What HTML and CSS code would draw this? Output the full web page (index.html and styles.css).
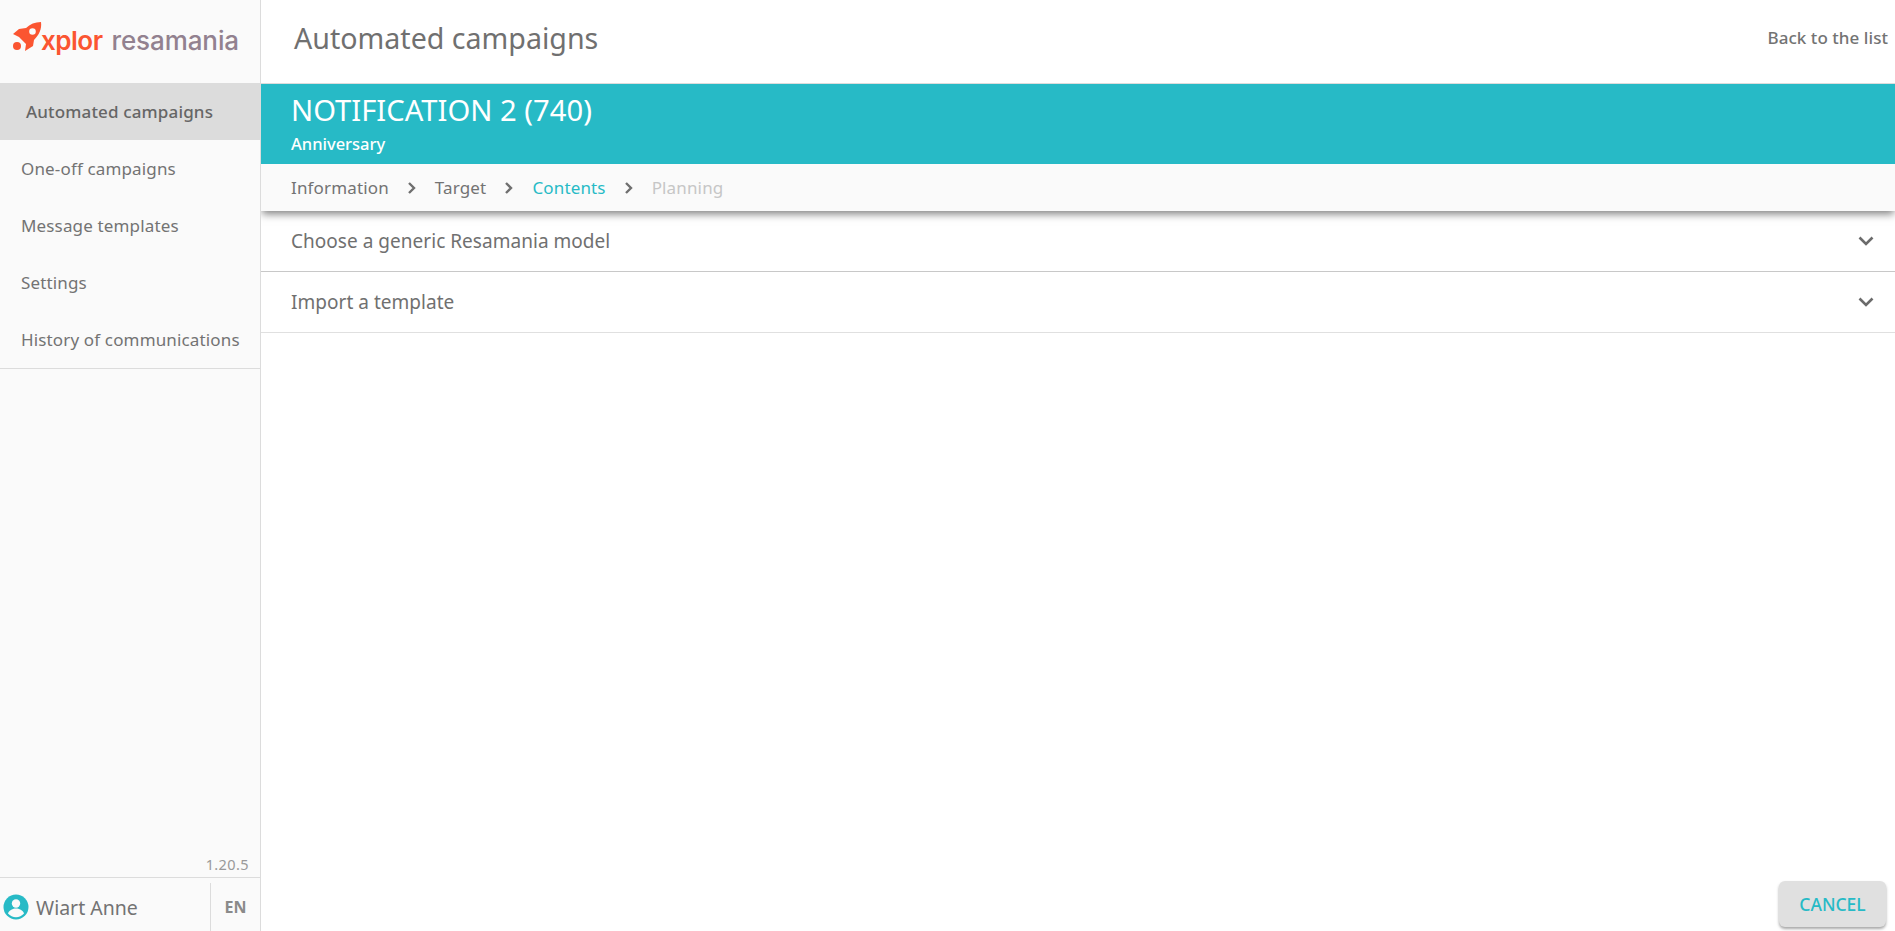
FILE: index.html
```html
<!DOCTYPE html>
<html lang="en">
<head>
<meta charset="utf-8">
<title>Automated campaigns</title>
<link rel="stylesheet" href="styles.css">
</head>
<body>
<div class="app">
  <aside class="sidebar">
    <div class="logo">
      <svg class="rocket" viewBox="0 0 30 32" width="30" height="32">
        <path fill="#fb5531" fill-rule="evenodd" d="M28 1C29 8 26 14 21 19L20 25 12 30 13 23 6 16 0 13 6 8 13 7C17 3 22 1 28 1ZM19.500 7.200a3.300 3.300 0 1 0 0 6.600 3.300 3.300 0 0 0 0-6.600Z"/>
        <circle fill="#fb5531" cx="4" cy="25" r="4"/>
      </svg>
      <span class="logo-x">xplor</span><span class="logo-r">resamania</span>
    </div>
    <nav class="nav">
      <a class="nav-item active">Automated campaigns</a>
      <a class="nav-item">One-off campaigns</a>
      <a class="nav-item">Message templates</a>
      <a class="nav-item">Settings</a>
      <a class="nav-item">History of communications</a>
    </nav>
    <div class="version">1.20.5</div>
    <div class="user">
      <div class="user-name">
        <svg class="avatar" viewBox="0 0 26 26" width="26" height="26">
          <circle cx="13" cy="13" r="12.500" fill="#27bac6"/>
          <circle cx="13" cy="9.500" r="4.200" fill="#fafafa"/>
          <path fill="#fafafa" d="M5 19.500c1-3.500 5-5 8-5s7 1.500 8 5c-2 2.400-5 3.800-8 3.800s-6-1.400-8-3.800z"/>
        </svg>
        <span>Wiart Anne</span>
      </div>
      <div class="lang">EN</div>
    </div>
  </aside>
  <main class="main">
    <header class="topbar">
      <h1>Automated campaigns</h1>
      <a class="back">Back to the list</a>
    </header>
    <section class="banner">
      <div class="banner-title">NOTIFICATION 2 (740)</div>
      <div class="banner-sub">Anniversary</div>
    </section>
    <div class="steps">
      <span class="step">Information</span>
      <svg class="sep" viewBox="0 0 10 14" width="10" height="14"><path d="M2 2l5 5-5 5" /></svg>
      <span class="step">Target</span>
      <svg class="sep" viewBox="0 0 10 14" width="10" height="14"><path d="M2 2l5 5-5 5" /></svg>
      <span class="step current">Contents</span>
      <svg class="sep" viewBox="0 0 10 14" width="10" height="14"><path d="M2 2l5 5-5 5" /></svg>
      <span class="step todo">Planning</span>
    </div>
    <div class="accordion">
      <div class="acc-row"><span>Choose a generic Resamania model</span>
        <svg class="chev" viewBox="0 0 16 10" width="16" height="10"><path d="M1.500 1.500L8 8l6.500-6.500"/></svg></div>
      <div class="acc-row light"><span>Import a template</span>
        <svg class="chev" viewBox="0 0 16 10" width="16" height="10"><path d="M1.500 1.500L8 8l6.500-6.500"/></svg></div>
    </div>
    <div class="actions"><button class="cancel">CANCEL</button></div>
  </main>
</div>
</body>
</html>
```
FILE: styles.css
```css
* { box-sizing: border-box; }
html, body { margin: 0; height: 100%; }
body {
  font-family: "Noto Sans", "Open Sans", sans-serif;
  color: #6b6b6b;
  background: #fff;
  overflow: hidden;
}
.app { display: flex; height: 931px; }

.sidebar {
  width: 261px;
  flex: none;
  background: #fafafa;
  border-right: 1px solid #dcdcdc;
  display: flex;
  flex-direction: column;
}
.logo {
  height: 83px;
  display: flex;
  align-items: center;
  padding: 0 0 0 13px;
  flex: none;
}
.rocket { flex: none; margin: -10px 0 0 0; }
.logo-x {
  font-family: "Inter", sans-serif;
  font-weight: 600;
  font-size: 26px;
  letter-spacing: -0.5px;
  color: #fb5531;
  margin-left: -2px;
  line-height: 1;
  padding-bottom: 2px;
}
.logo-r {
  font-family: "Inter", sans-serif;
  font-weight: 500;
  font-size: 26px;
  letter-spacing: -0.1px;
  color: #92818f;
  margin-left: 9px;
  line-height: 1;
  padding-bottom: 2px;
}
.nav {
  border-bottom: 1px solid #dcdcdc;
  height: 286px;
  flex: none;
  display: flex;
  flex-direction: column;
}
.nav-item {
  height: 57px;
  flex: none;
  display: flex;
  align-items: center;
  padding-left: 21px;
  font-size: 17px;
  letter-spacing: 0.15px;
  color: #737373;
}
.nav-item.active {
  background: #dcdcdc;
  padding-left: 26px;
  font-weight: 500;
  color: #666;
}
.version {
  margin-top: auto;
  text-align: right;
  font-size: 14.500px;
  letter-spacing: 0.4px;
  color: #999;
  padding: 0 11px 3px 0;
}
.user {
  height: 54px;
  flex: none;
  border-top: 1px solid #dcdcdc;
  display: flex;
  align-items: stretch;
  padding-top: 5px;
}
.user-name {
  width: 211px;
  flex: none;
  display: flex;
  align-items: center;
  gap: 7px;
  padding-left: 3px;
  font-size: 19.500px;
  color: #737373;
  border-right: 1px solid #dcdcdc;
}
.avatar { flex: none; }
.lang {
  flex: 1;
  display: flex;
  align-items: center;
  justify-content: center;
  font-size: 16px;
  font-weight: 700;
  color: #8a8a8a;
}

.main {
  flex: 1;
  min-width: 0;
  display: flex;
  flex-direction: column;
  overflow: hidden;
}
.topbar {
  height: 84px;
  flex: none;
  border-bottom: 1px solid #dcdcdc;
  display: flex;
  align-items: center;
  justify-content: space-between;
  padding: 0 7px 0 33px;
}
.topbar h1 {
  margin: 0;
  font-size: 28.600px;
  font-weight: 400;
  color: #707070;
  padding-bottom: 8px;
}
.back {
  font-size: 17px;
  font-weight: 500;
  letter-spacing: 0.05px;
  color: #737373;
  padding-bottom: 9px;
}
.banner {
  height: 80px;
  flex: none;
  background: #27bac6;
  color: #fff;
  padding: 7px 0 0 30px;
  position: relative;
  z-index: 2;
}
.banner-title { font-size: 29.200px; line-height: 38px; }
.banner-sub { font-size: 16.500px; line-height: 24px; margin-top: 3px; font-weight: 500; }
.steps {
  height: 47px;
  flex: none;
  background: #fafafa;
  display: flex;
  align-items: center;
  padding-left: 30px;
  box-shadow: 0 4px 8px -1px rgba(0, 0, 0, 0.5);
  position: relative;
  z-index: 1;
  font-size: 17px;
  letter-spacing: 0.15px;
}
.step { color: #737373; }
.step.current { color: #27bac6; }
.step.todo { color: #c6c6c6; }
.sep { margin: 0 18px; fill: none; stroke: #6f6f6f; stroke-width: 2.400; }
.accordion { flex: none; }
.acc-row {
  height: 61px;
  display: flex;
  align-items: center;
  justify-content: space-between;
  padding: 0 21px 0 30px;
  border-bottom: 1px solid #c8c8c8;
  font-size: 19px;
  letter-spacing: 0.03px;
  color: #707070;
}
.acc-row.light { border-bottom-color: #e0e0e0; }
.chev { fill: none; stroke: #6b6b6b; stroke-width: 2.600; }
.actions {
  margin-top: auto;
  display: flex;
  justify-content: flex-end;
  padding: 0 9px 4px 0;
}
.cancel {
  width: 107px;
  height: 46px;
  border: 0;
  border-radius: 6px;
  background: #e0e0e0;
  box-shadow: 0 2px 3px rgba(0, 0, 0, 0.35);
  color: #27bac6;
  font-family: "Noto Sans", sans-serif;
  font-size: 17.500px;
  font-weight: 500;
}
```
